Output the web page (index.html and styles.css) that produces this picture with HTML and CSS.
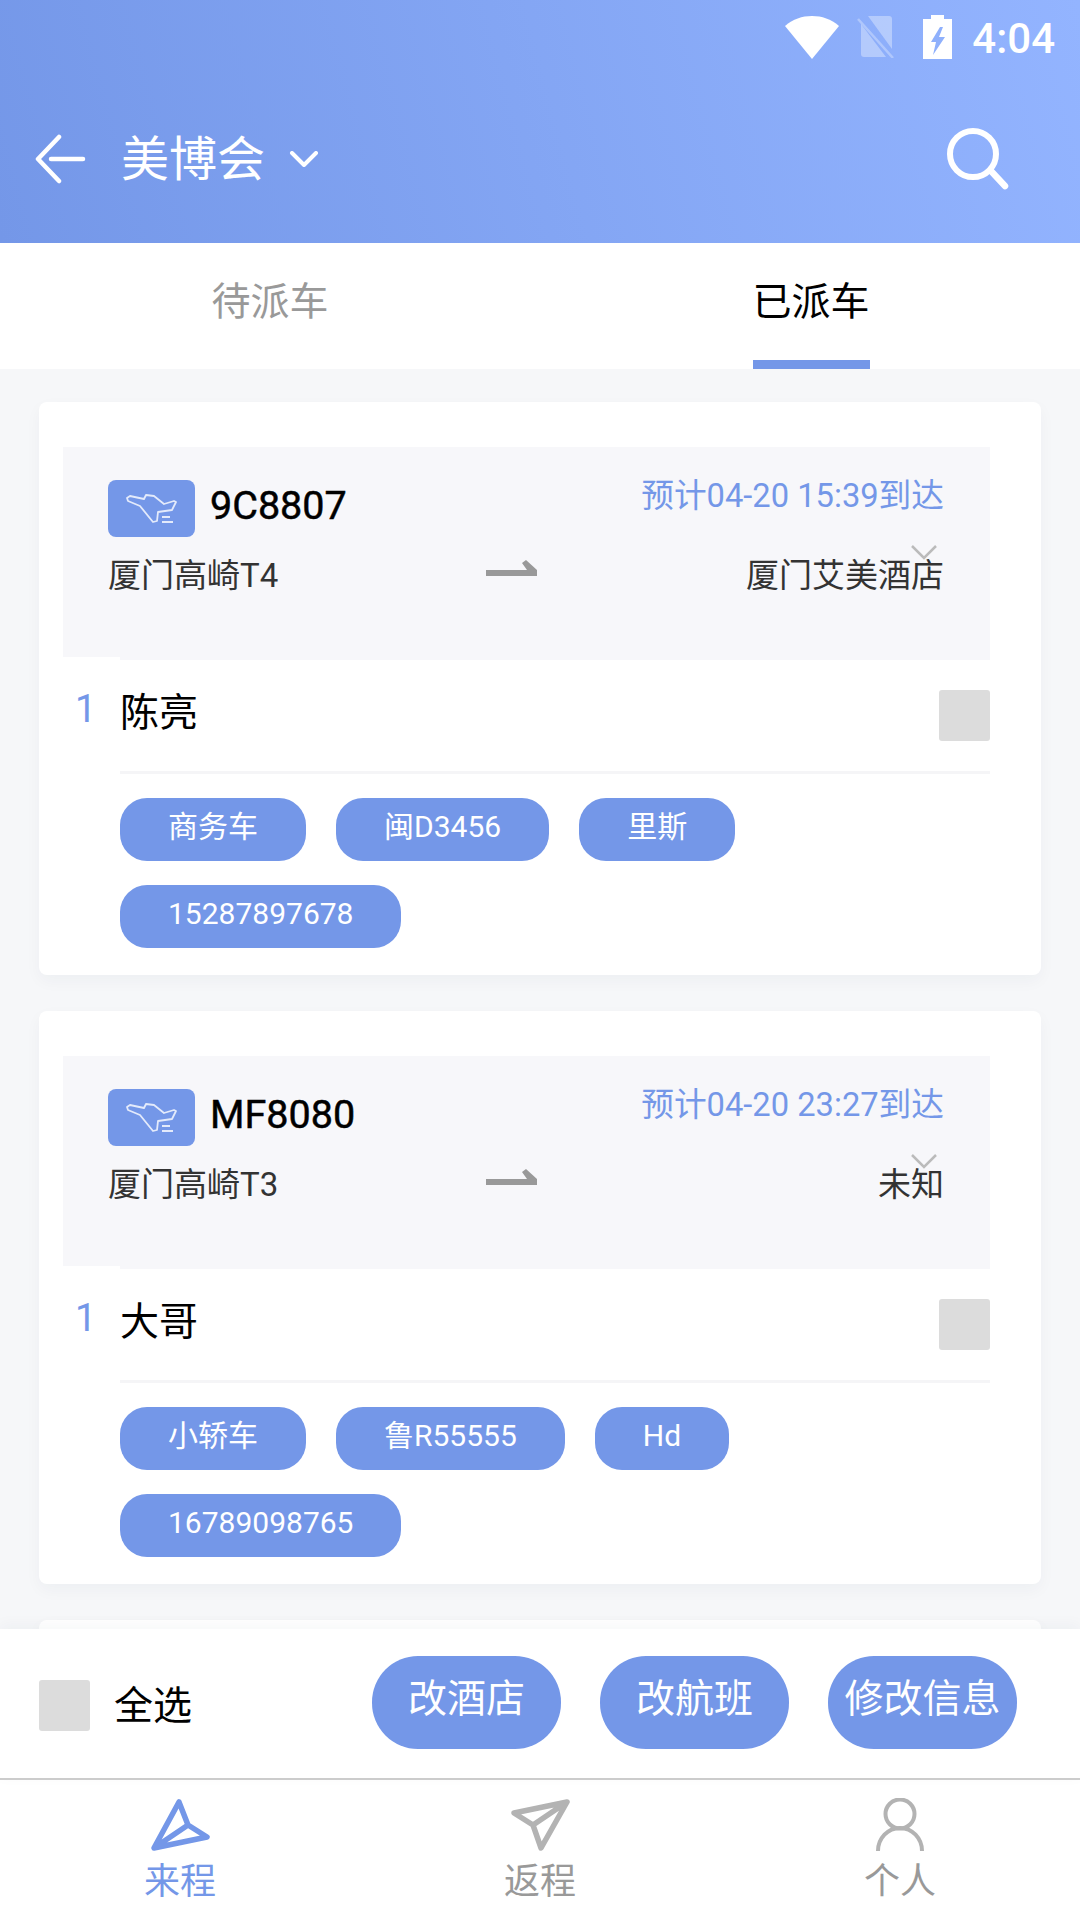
FILE: index.html
```html
<!DOCTYPE html>
<html lang="zh-CN">
<head>
<meta charset="utf-8">
<title>已派车</title>
<link rel="stylesheet" href="styles.css">
</head>
<body>
<div class="app">
  <header class="header">
    <div class="status">
      <svg class="st-wifi" viewBox="0 0 54 43"><path d="M0 10C8 3 17 0 27 0S46 3 54 10L27 43Z" fill="#fff"/></svg>
      <svg class="st-sim" viewBox="0 0 38 42"><g fill="#fff" fill-opacity=".35"><path d="M11 0H32a3 3 0 0 1 3 3V33Z"/><path d="M4 8V38a3 3 0 0 0 3 3H29Z"/></g><path d="M1 3L36 42" stroke="#fff" stroke-opacity=".3" stroke-width="2.5"/></svg>
      <svg class="st-bat" viewBox="0 0 29 44"><path fill="#fff" fill-rule="evenodd" d="M8 0H21V4H29V44H0V4H8ZM17 12L8 27H13L10 40L22 22H16L20 12Z"/></svg>
      <span class="st-time">4:04</span>
    </div>
    <div class="toolbar">
      <svg class="ic-back" viewBox="0 0 52 50"><path d="M25 3L4 25L25 47M17 25H49" fill="none" stroke="#fff" stroke-width="4.5" stroke-linecap="round" stroke-linejoin="round"/></svg>
      <span class="title">美博会</span>
      <svg class="ic-down" viewBox="0 0 30 16"><path d="M3 2L15 14L27 2" fill="none" stroke="#fff" stroke-width="4" stroke-linecap="round" stroke-linejoin="round"/></svg>
      <svg class="ic-search" viewBox="0 0 62 62"><circle cx="26" cy="26" r="23" fill="none" stroke="#fff" stroke-width="6"/><path d="M44 43L58 58" stroke="#fff" stroke-width="6.5" stroke-linecap="round"/></svg>
    </div>
  </header>

  <nav class="tabs">
    <div class="tab">待派车</div>
    <div class="tab tab-on">已派车</div>
  </nav>

  <main class="list">
    <section class="card">
      <div class="flight">
        <div class="flight-top">
          <div class="flight-id">
            <span class="chip"><svg class="ic-plane" viewBox="0 0 87 57"><path d="M19 18L22 16L36 19L38 15L46 16L56 24L66 21L68 22L64 30L50 32L49 41L45 42L32 26L20 21ZM54 37H62M54 42H65" fill="none" stroke="#fff" stroke-opacity=".8" stroke-width="1.8" stroke-linejoin="round"/></svg></span>
            <span class="code">9C8807</span>
          </div>
          <span class="eta">预计04-20 15:39到达</span>
        </div>
        <div class="route">
          <span class="place">厦门高崎T4</span>
          <svg class="ic-route" viewBox="0 0 51 16"><path d="M0 10H41L36 3L40 0L51 10V16H0Z" fill="#999"/></svg>
          <span class="place place-end">厦门艾美酒店</span>
        </div>
        <svg class="ic-fold" viewBox="0 0 26 15"><path d="M1 1L13 13L25 1" fill="none" stroke="#bbb" stroke-width="2.5"/></svg>
      </div>
      <div class="person">
        <div class="num">1</div>
        <div class="person-main">
          <span class="name">陈亮</span>
          <span class="check"></span>
        </div>
      </div>
      <div class="pills">
        <span class="pill">商务车</span>
        <span class="pill">闽D3456</span>
        <span class="pill">里斯</span>
        <span class="pill">15287897678</span>
      </div>
    </section>

    <section class="card">
      <div class="flight">
        <div class="flight-top">
          <div class="flight-id">
            <span class="chip"><svg class="ic-plane" viewBox="0 0 87 57"><path d="M19 18L22 16L36 19L38 15L46 16L56 24L66 21L68 22L64 30L50 32L49 41L45 42L32 26L20 21ZM54 37H62M54 42H65" fill="none" stroke="#fff" stroke-opacity=".8" stroke-width="1.8" stroke-linejoin="round"/></svg></span>
            <span class="code">MF8080</span>
          </div>
          <span class="eta">预计04-20 23:27到达</span>
        </div>
        <div class="route">
          <span class="place">厦门高崎T3</span>
          <svg class="ic-route" viewBox="0 0 51 16"><path d="M0 10H41L36 3L40 0L51 10V16H0Z" fill="#999"/></svg>
          <span class="place place-end">未知</span>
        </div>
        <svg class="ic-fold" viewBox="0 0 26 15"><path d="M1 1L13 13L25 1" fill="none" stroke="#bbb" stroke-width="2.5"/></svg>
      </div>
      <div class="person">
        <div class="num">1</div>
        <div class="person-main">
          <span class="name">大哥</span>
          <span class="check"></span>
        </div>
      </div>
      <div class="pills">
        <span class="pill">小轿车</span>
        <span class="pill">鲁R55555</span>
        <span class="pill">Hd</span>
        <span class="pill">16789098765</span>
      </div>
    </section>

    <section class="card card-stub"></section>
  </main>

  <div class="actions">
    <span class="check"></span>
    <span class="all">全选</span>
    <div class="btns">
      <span class="btn">改酒店</span>
      <span class="btn">改航班</span>
      <span class="btn">修改信息</span>
    </div>
  </div>

  <footer class="nav">
    <div class="nav-item nav-on">
      <svg class="nav-ic" viewBox="0 0 60 54"><path d="M29 4L38 27L57 39L4 50ZM4 50L38 27" fill="none" stroke="#7497e8" stroke-width="5.5" stroke-linejoin="round"/></svg>
      <span>来程</span>
    </div>
    <div class="nav-item">
      <svg class="nav-ic" viewBox="0 0 60 54"><path d="M57 4L4 15L23 27L31 50ZM57 4L23 27" fill="none" stroke="#b3b3b3" stroke-width="5.5" stroke-linejoin="round"/></svg>
      <span>返程</span>
    </div>
    <div class="nav-item">
      <svg class="nav-ic" viewBox="0 0 60 54"><circle cx="30" cy="16" r="14.5" fill="none" stroke="#b3b3b3" stroke-width="4"/><path d="M8 53A22 23 0 0 1 52 53" fill="none" stroke="#b3b3b3" stroke-width="4"/></svg>
      <span>个人</span>
    </div>
  </footer>
</div>
</body>
</html>
```
FILE: styles.css
```css
* { box-sizing: border-box; }
html, body { margin: 0; padding: 0; }
body {
  font-family: Roboto, "Noto Sans CJK SC", sans-serif;
  background: #f6f7f9;
  color: #000;
}
.app {
  width: 1080px;
  height: 1920px;
  display: flex;
  flex-direction: column;
  overflow: hidden;
}

/* header */
.header {
  height: 243px;
  flex: none;
  background: linear-gradient(75deg, #7497e8 0%, #93b4ff 100%);
  color: #fff;
}
.status {
  height: 74px;
  display: flex;
  align-items: center;
  justify-content: flex-end;
  padding-right: 25px;
}
.st-wifi { width: 54px; height: 43px; margin-right: 18px; }
.st-sim { width: 38px; height: 42px; margin-right: 28px; }
.st-bat { width: 29px; height: 44px; margin-right: 20px; }
.st-time { font-size: 42px; font-weight: 500; line-height: 44px; padding-top: 4px; }
.toolbar {
  height: 169px;
  display: flex;
  align-items: center;
  padding: 0 71px 0 34px;
}
.ic-back { width: 52px; height: 50px; }
.title { font-size: 48px; line-height: 60px; margin-left: 35px; padding-top: 2px; }
.ic-down { width: 30px; height: 16px; margin-left: 24px; }
.ic-search { width: 62px; height: 62px; margin-left: auto; }

/* tabs */
.tabs {
  height: 126px;
  flex: none;
  display: grid;
  grid-template-columns: 1fr 1fr;
  background: #fff;
}
.tab {
  justify-self: center;
  width: 117px;
  text-align: center;
  font-size: 39px;
  line-height: 54px;
  padding-top: 32px;
  color: #999;
  white-space: nowrap;
}
.tab-on { color: #000; border-bottom: 9px solid #7497e8; margin-left: 2px; }

/* list */
.list {
  flex: 1;
  min-height: 0;
  overflow: hidden;
  padding: 33px 39px 0;
  display: flex;
  flex-direction: column;
  gap: 36px;
}
.card {
  flex: none;
  background: #fff;
  border-radius: 8px;
  padding: 45px 51px 27px 24px;
  box-shadow: 0 6px 16px rgba(30, 40, 70, .04);
}
.card-stub { height: 60px; }
.flight {
  position: relative;
  height: 213px;
  background: #f7f7fa;
  padding: 33px 46px 0 45px;
}
.flight-top {
  display: flex;
  justify-content: space-between;
  align-items: flex-start;
  height: 57px;
}
.flight-id { display: flex; align-items: flex-start; gap: 15px; }
.chip {
  width: 87px;
  height: 57px;
  border-radius: 8px;
  background: #7497e8;
  display: block;
}
.ic-plane { display: block; width: 87px; height: 57px; }
.code { font-size: 39.5px; font-weight: 400; -webkit-text-stroke: .5px #000; line-height: 52px; }
.eta { font-size: 32.7px; line-height: 32px; color: #7497e8; white-space: nowrap; }
.route {
  display: grid;
  grid-template-columns: 378px 51px 1fr;
  margin-top: 19px;
  height: 40px;
  font-size: 33px;
  line-height: 40px;
  color: #333;
}
.ic-route { width: 51px; height: 16px; margin-top: 4px; }
.place-end { text-align: right; }
.ic-fold { position: absolute; left: 848px; top: 98px; width: 26px; height: 15px; }

.person { display: flex; }
.num {
  position: relative;
  width: 57px;
  margin-top: -3px;
  background: #fff;
  padding: 30px 0 0 12px;
  font-size: 38px;
  line-height: 44px;
  color: #7497e8;
}
.person-main {
  flex: 1;
  height: 114px;
  padding-top: 31px;
  display: flex;
  justify-content: space-between;
  align-items: flex-start;
  border-bottom: 3px solid #f5f5f7;
}
.name { font-size: 39px; line-height: 44px; }
.person-main .check { margin-top: -1px; }
.check {
  display: block;
  width: 51px;
  height: 51px;
  background: #dcdcdc;
  border-radius: 3px;
  flex: none;
}
.pills {
  display: flex;
  flex-wrap: wrap;
  gap: 24px 30px;
  margin-left: 57px;
  padding-top: 24px;
}
.pill {
  height: 63px;
  padding: 0 48px 6px;
  display: flex;
  align-items: center;
  border-radius: 27px;
  background: #7497e8;
  color: #fff;
  font-size: 30px;
  line-height: 40px;
  white-space: nowrap;
}

/* bottom actions */
.actions {
  position: relative;
  z-index: 1;
  flex: none;
  height: 151px;
  display: flex;
  align-items: center;
  background: #fff;
  padding: 0 63px 2px 39px;
  border-bottom: 2px solid #ccc;
  box-shadow: 0 -4px 14px rgba(30, 40, 70, .04);
}
.actions .check { margin-top: 6px; }
.all { font-size: 39px; line-height: 50px; margin-left: 24px; padding-top: 6px; }
.btns { margin-left: auto; display: flex; gap: 39px; }
.btn {
  width: 189px;
  height: 93px;
  padding-bottom: 8px;
  display: flex;
  align-items: center;
  justify-content: center;
  border-radius: 46px;
  background: #7497e8;
  color: #fff;
  font-size: 39px;
  line-height: 50px;
  white-space: nowrap;
}

/* bottom nav */
.nav {
  flex: none;
  height: 140px;
  display: grid;
  grid-template-columns: repeat(3, 1fr);
  background: #fff;
}
.nav-item {
  display: flex;
  flex-direction: column;
  align-items: center;
  padding-top: 18px;
  font-size: 36px;
  line-height: 44px;
  color: #999;
}
.nav-on { color: #7497e8; }
.nav-ic { width: 60px; height: 54px; margin-bottom: 8px; }
```
